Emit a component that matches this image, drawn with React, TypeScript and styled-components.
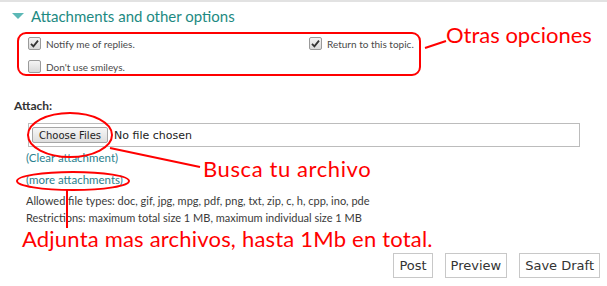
import React from "react";
import styled, { createGlobalStyle } from "styled-components";

const GlobalStyle = createGlobalStyle`
  html, body {
    margin: 0;
    padding: 0;
    background: #fff;
  }
  body {
    font-family: Lato, "Open Sans", sans-serif;
  }
`;

const red = "#ff0000";
const teal = "#1d8a82";
const linkTeal = "#2a7f8e";

const Page = styled.div`
  position: relative;
  width: 607px;
  height: 286px;
  overflow: hidden;
  border-top: 2px solid #e2e2e2;
  box-sizing: border-box;
`;

const Header = styled.div`
  display: flex;
  align-items: center;
  gap: 7px;
  padding: 4px 0 0 12px;
  height: 20px;
`;

const Triangle = styled.span`
  width: 0;
  height: 0;
  border-left: 6px solid transparent;
  border-right: 6px solid transparent;
  border-top: 6px solid #5cb8b6;
`;

const Title = styled.h2`
  margin: 0;
  font-size: 15px;
  font-weight: 400;
  color: ${teal};
`;

const OptionsRow = styled.div`
  display: flex;
  align-items: flex-start;
  margin: 6px 0 0 17px;
`;

const OptionsBox = styled.div`
  width: 404px;
  height: 44px;
  box-sizing: border-box;
  border: 2px solid ${red};
  border-radius: 9px;
  display: grid;
  grid-template-columns: 281px 1fr;
  grid-template-rows: 23px 14px;
  padding: 3px 0 0 9px;
`;

const Option = styled.label`
  display: flex;
  align-items: center;
  gap: 5px;
  font-size: 10px;
  color: #4a4a4a;
  height: 13px;
`;

const Box = styled.span`
  width: 11px;
  height: 11px;
  border: 1px solid #9a9a9a;
  border-radius: 2px;
  background: linear-gradient(#f4f4f4, #d9d9d9);
  display: flex;
  align-items: center;
  justify-content: center;
  flex: none;
`;

const Callout = styled.div`
  color: ${red};
  font-family: Lato, "Open Sans", sans-serif;
  font-size: 22px;
  line-height: 1;
  white-space: nowrap;
`;

const OptionsCallout = styled(Callout)`
  margin: -8px 0 0 25px;
`;

const LinksCallout = styled(Callout)`
  letter-spacing: 0.6px;
`;

const AttachLabel = styled.div`
  padding: 22px 0 0 14px;
  font-size: 12px;
  font-weight: 700;
  color: #333;
  height: 14px;
`;

const FileField = styled.div`
  margin: 11px 0 0 28px;
  width: 552px;
  height: 24px;
  box-sizing: border-box;
  border: 1px solid #bcbcbc;
  display: flex;
  align-items: center;
  gap: 6px;
  padding-left: 3px;
`;

const ChooseButton = styled.button`
  width: 76px;
  height: 16px;
  padding: 0;
  border: 1px solid #a6a6a6;
  border-radius: 2px;
  background: linear-gradient(#f6f6f6, #dedede);
  font-family: "DejaVu Sans", sans-serif;
  font-size: 10px;
  color: #222;
`;

const NoFile = styled.span`
  font-family: "DejaVu Sans", sans-serif;
  font-size: 11px;
  color: #222;
`;

const LinksRow = styled.div`
  display: flex;
  align-items: center;
  margin: 4px 0 0 26px;
`;

const Links = styled.div`
  display: flex;
  flex-direction: column;
  gap: 9px;
  width: 177px;
`;

const Link = styled.a`
  font-size: 11.5px;
  color: ${linkTeal};
  text-decoration: none;
  line-height: 13px;
`;

const Info = styled.div`
  margin: 6px 0 0 26px;
  font-size: 11px;
  color: #3a3a3a;
  line-height: 17px;
`;

const BottomCallout = styled(Callout)`
  margin: 2px 0 0 22px;
  letter-spacing: 0.2px;
`;

const Actions = styled.div`
  display: flex;
  justify-content: flex-end;
  gap: 12px;
  padding-right: 7px;
  margin-top: 3px;
`;

const ActionButton = styled.button`
  height: 25px;
  padding: 0 5px;
  border: 1px solid #c8c8c8;
  background: #fff;
  font-family: "DejaVu Sans", sans-serif;
  font-size: 13px;
  color: #333;
`;

const Marks = styled.svg`
  position: absolute;
  left: 0;
  top: -2px;
  pointer-events: none;
`;

const Check = () => (
  <svg width="9" height="9" viewBox="0 0 9 9">
    <path d="M1 4.8 L3.4 7.3 L8 1.6" fill="none" stroke="#333" strokeWidth="1.8" />
  </svg>
);

const Checkbox = ({ checked, label }: { checked?: boolean; label: string }) => (
  <Option>
    <Box>{checked ? <Check /> : null}</Box>
    {label}
  </Option>
);

export default function App() {
  return (
    <>
      <GlobalStyle />
      <Page>
        <Header>
          <Triangle />
          <Title>Attachments and other options</Title>
        </Header>

        <OptionsRow>
          <OptionsBox>
            <Checkbox checked label="Notify me of replies." />
            <Checkbox checked label="Return to this topic." />
            <Checkbox label="Don't use smileys." />
          </OptionsBox>
          <OptionsCallout>Otras opciones</OptionsCallout>
        </OptionsRow>

        <AttachLabel>Attach:</AttachLabel>
        <FileField>
          <ChooseButton>Choose Files</ChooseButton>
          <NoFile>No file chosen</NoFile>
        </FileField>

        <LinksRow>
          <Links>
            <Link href="#">(Clear attachment)</Link>
            <Link href="#">(more attachments)</Link>
          </Links>
          <LinksCallout>Busca tu archivo</LinksCallout>
        </LinksRow>

        <Info>
          Allowed file types: doc, gif, jpg, mpg, pdf, png, txt, zip, c, h, cpp, ino, pde
          <br />
          Restrictions: maximum total size 1 MB, maximum individual size 1 MB
        </Info>

        <BottomCallout>Adjunta mas archivos, hasta 1Mb en total.</BottomCallout>

        <Actions>
          <ActionButton>Post</ActionButton>
          <ActionButton>Preview</ActionButton>
          <ActionButton>Save Draft</ActionButton>
        </Actions>

        <Marks width="607" height="286" viewBox="0 0 607 286">
          <g fill="none" stroke={red} strokeWidth="2">
            <line x1="425" y1="48" x2="446" y2="41" />
            <ellipse cx="70" cy="135" rx="42" ry="22" />
            <line x1="110" y1="148" x2="200" y2="167" />
            <ellipse cx="73" cy="181" rx="56" ry="9" />
            <line x1="67" y1="190" x2="67" y2="228" />
          </g>
        </Marks>
      </Page>
    </>
  );
}
